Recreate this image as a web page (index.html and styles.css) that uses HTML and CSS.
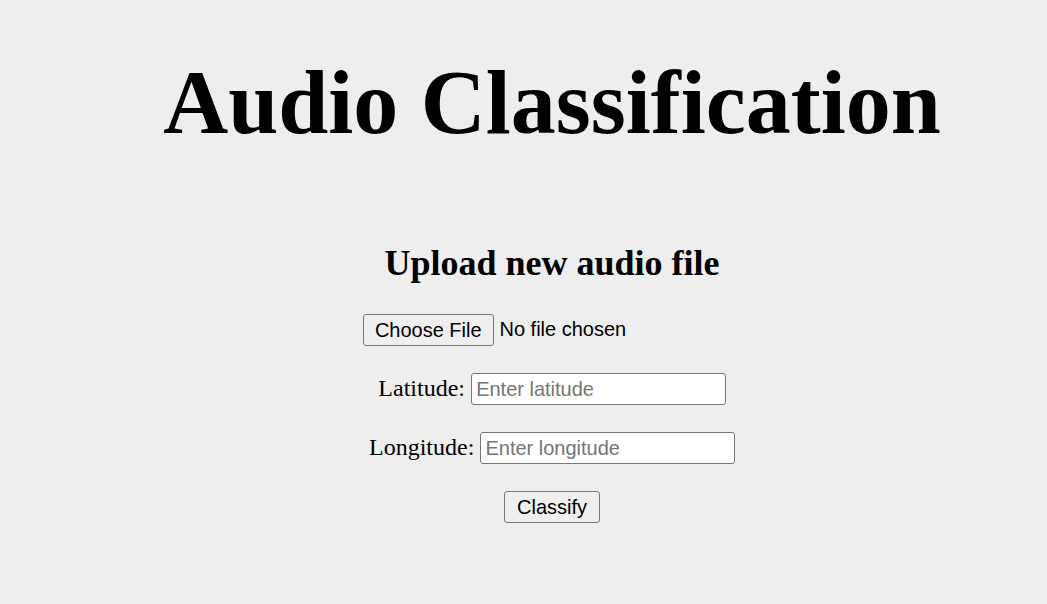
FILE: index.html
```html
<!DOCTYPE html>
<html lang="en">
<head>
<meta charset="utf-8">
<title>Audio Classification</title>
<link rel="stylesheet" href="styles.css">
</head>
<body>
<div class="page">
  <h1 class="title">Audio Classification</h1>
  <h2 class="subtitle">Upload new audio file</h2>
  <form class="form" onsubmit="return false">
    <div class="row"><input class="file" type="file" name="file"></div>
    <div class="row"><label class="label" for="lat">Latitude:</label><input class="field" id="lat" type="text" placeholder="Enter latitude"></div>
    <div class="row"><label class="label" for="lon">Longitude:</label><input class="field" id="lon" type="text" placeholder="Enter longitude"></div>
    <div class="row"><button class="btn" type="submit">Classify</button></div>
  </form>
</div>
</body>
</html>
```
FILE: styles.css
```css
html {
  background: #eeeeee;
}
body {
  margin: 0;
  zoom: 1.5;
  font-family: "Liberation Serif", "Times New Roman", serif;
  color: #000;
}
.page {
  padding: 0 8px 0 46px;
  text-align: center;
}
.title {
  font-size: 60px;
  font-weight: bold;
  margin: 34px 0 0;
  line-height: normal;
}
.subtitle {
  font-size: 24px;
  font-weight: bold;
  margin: 58.6px 0 0;
}
.form {
  margin-top: 20.3px;
  display: flex;
  flex-direction: column;
  align-items: center;
  gap: 18px;
}
.row {
  display: flex;
  align-items: baseline;
  justify-content: center;
  gap: 3.5px;
}
.row + .row .field {
  margin-left: 0.3px;
}
.label {
  font-size: 16px;
}
.field {
  box-sizing: border-box;
  width: 170px;
  height: 21.33px;
  font-family: "Liberation Sans", Arial, sans-serif;
  font-size: 13.333px;
  border: 1px solid #767676;
  border-radius: 2px;
  padding: 1px 3px;
  background: #fff;
}
.field::placeholder {
  color: #757575;
}
.file {
  width: 252px;
  font-family: "Liberation Sans", Arial, sans-serif;
  font-size: 13.333px;
}
.file::file-selector-button {
  font-family: "Liberation Sans", Arial, sans-serif;
  font-size: 13.333px;
  background: #efefef;
  border: 1px solid #767676;
  border-radius: 2px;
  padding: 1px 7.3px;
  height: 21.33px;
  margin-right: 4px;
}
.btn {
  font-family: "Liberation Sans", Arial, sans-serif;
  font-size: 13.333px;
  background: #efefef;
  border: 1px solid #767676;
  border-radius: 2px;
  padding: 1px 7.7px;
  height: 21.33px;
  color: #000;
}
```
